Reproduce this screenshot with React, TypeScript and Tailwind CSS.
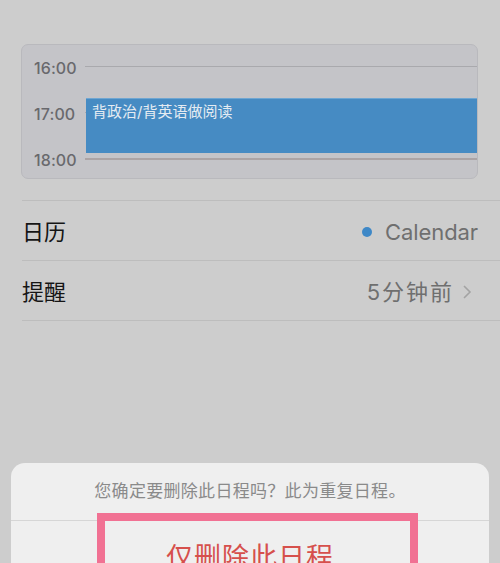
const FONT = "font-['Inter','Noto_Sans_CJK_SC',sans-serif]";

const HOURS = ["16:00", "17:00", "18:00"];

function HourRow({ label, last }: { label: string; last?: boolean }) {
  return (
    <div className="flex h-[46px] shrink-0 items-center pl-[12px]">
      <span className="w-[41px] text-[16px] font-medium leading-none tracking-[0.1px] text-[#69696d]">
        {label}
      </span>
      <div
        className={
          last
            ? "ml-[10px] mt-[-2px] h-[2px] flex-1 bg-[#aba4a5]"
            : "ml-[10px] mt-[-3px] h-px flex-1 bg-[#a9a9ad]"
        }
      />
    </div>
  );
}

function DetailRow({ label, children }: { label: string; children: React.ReactNode }) {
  return (
    <div className="flex h-[60px] items-center justify-between border-b border-[#bdbdbd] pr-[22px] pt-[3px]">
      <span className="text-[22px] leading-none text-[#151515]">{label}</span>
      <div className="flex items-center text-[22px] leading-none text-[#6f6f6f]">{children}</div>
    </div>
  );
}

export default function App() {
  return (
    <div className={`${FONT} flex h-[563px] w-[500px] flex-col overflow-hidden bg-[#cdcdcd]`}>
      <div className="relative ml-[21px] mt-[44px] flex h-[135px] w-[457px] shrink-0 flex-col overflow-hidden rounded-[7px] border border-[#b9b9bd] bg-[#c4c4c8]">
        {HOURS.map((h, i) => (
          <HourRow key={h} label={h} last={i === HOURS.length - 1} />
        ))}
        <div className="absolute left-[64px] right-0 top-[53px] h-[55px] border-t border-[#6fa6d2] bg-[#468bc3] pl-[6px]">
          <span className="text-[15px] leading-[18px] text-[#e4ebf2]">背政治/背英语做阅读</span>
        </div>
      </div>

      <div className="ml-[22px] mt-[21px] shrink-0 border-t border-[#bdbdbd]">
        <DetailRow label="日历">
          <span className="mr-[13px] h-[10px] w-[10px] rounded-full bg-[#3e88c7]" />
          <span className="tracking-[-0.1px]">Calendar</span>
        </DetailRow>
        <DetailRow label="提醒">
          <span className="tracking-[2px]">5分钟前</span>
          <svg width="10" height="16" viewBox="0 0 10 16" className="ml-[8px] mr-[6px]">
            <polyline points="2,2 8,8 2,14" fill="none" stroke="#a3a3a3" strokeWidth="1.6" />
          </svg>
        </DetailRow>
      </div>

      <div className="relative mx-[11px] mt-[142px] h-[120px] shrink-0 rounded-t-[14px] bg-[#efefef]">
        <div className="flex h-[58px] items-center justify-center border-b border-[#d6d6d6]">
          <span className="text-[17px] leading-none tracking-[0.3px] text-[#8a8a8a]">
            您确定要删除此日程吗？此为重复日程。
          </span>
        </div>
        <div className="flex justify-center pt-[23px]">
          <span className="text-[27px] leading-[27px] tracking-[1px] text-[#d6504c]">仅删除此日程</span>
        </div>
        <div className="absolute left-[86px] top-[50px] h-[80px] w-[321px] border-[8px] border-[#f17193]" />
      </div>
    </div>
  );
}
